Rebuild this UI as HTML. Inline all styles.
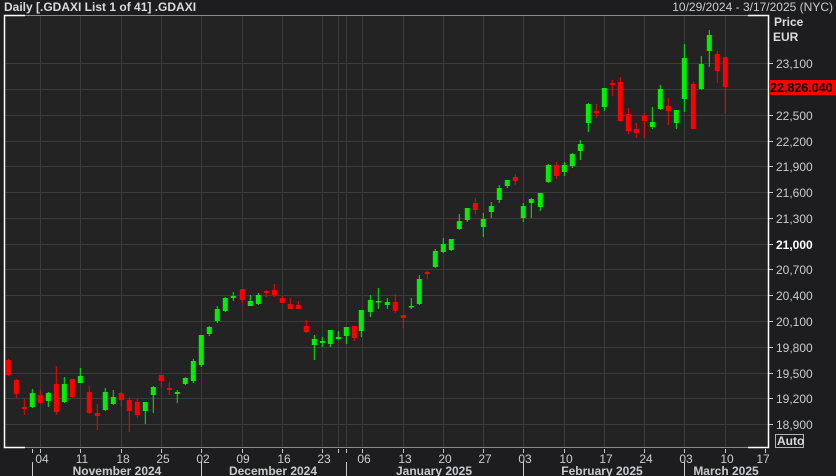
<!DOCTYPE html>
<html><head><meta charset="utf-8"><style>
html,body{margin:0;padding:0;background:#1d1d1f;width:836px;height:476px;overflow:hidden}
svg{display:block}
text{font-family:"Liberation Sans","DejaVu Sans",sans-serif;font-size:12px;fill:#c8ccd0}
.b{font-weight:bold}
</style></head><body>
<svg width="836" height="476" viewBox="0 0 836 476" xmlns="http://www.w3.org/2000/svg">
<rect x="0" y="0" width="836" height="476" fill="#1d1d1f"/>
<rect x="4" y="15" width="764" height="432" fill="#222322"/>
<text x="4" y="11" class="b" style="fill:#d8dadc">Daily [.GDAXI List 1 of 41] .GDAXI</text>
<text x="833" y="11" text-anchor="end" style="fill:#c8ccd0">10/29/2024 - 3/17/2025 (NYC)</text>
<g stroke="#3a3b3a" stroke-width="1">
<line x1="4" x2="768" y1="63.5" y2="63.5"/><line x1="4" x2="768" y1="89.5" y2="89.5"/><line x1="4" x2="768" y1="115.5" y2="115.5"/><line x1="4" x2="768" y1="141.5" y2="141.5"/><line x1="4" x2="768" y1="166.5" y2="166.5"/><line x1="4" x2="768" y1="192.5" y2="192.5"/><line x1="4" x2="768" y1="218.5" y2="218.5"/><line x1="4" x2="768" y1="244.5" y2="244.5"/><line x1="4" x2="768" y1="269.5" y2="269.5"/><line x1="4" x2="768" y1="295.5" y2="295.5"/><line x1="4" x2="768" y1="321.5" y2="321.5"/><line x1="4" x2="768" y1="347.5" y2="347.5"/><line x1="4" x2="768" y1="373.5" y2="373.5"/><line x1="4" x2="768" y1="398.5" y2="398.5"/><line x1="4" x2="768" y1="424.5" y2="424.5"/>
<line y1="15" y2="447" x1="40.5" x2="40.5"/><line y1="15" y2="447" x1="80.5" x2="80.5"/><line y1="15" y2="447" x1="121.5" x2="121.5"/><line y1="15" y2="447" x1="161.5" x2="161.5"/><line y1="15" y2="447" x1="201.5" x2="201.5"/><line y1="15" y2="447" x1="242.5" x2="242.5"/><line y1="15" y2="447" x1="282.5" x2="282.5"/><line y1="15" y2="447" x1="322.5" x2="322.5"/><line y1="15" y2="447" x1="338.5" x2="338.5"/><line y1="15" y2="447" x1="346.5" x2="346.5"/><line y1="15" y2="447" x1="362.5" x2="362.5"/><line y1="15" y2="447" x1="403.5" x2="403.5"/><line y1="15" y2="447" x1="443.5" x2="443.5"/><line y1="15" y2="447" x1="483.5" x2="483.5"/><line y1="15" y2="447" x1="523.5" x2="523.5"/><line y1="15" y2="447" x1="564.5" x2="564.5"/><line y1="15" y2="447" x1="604.5" x2="604.5"/><line y1="15" y2="447" x1="644.5" x2="644.5"/><line y1="15" y2="447" x1="684.5" x2="684.5"/><line y1="15" y2="447" x1="725.5" x2="725.5"/>
</g>
<!-- borders -->
<g stroke="#8a8a8a" stroke-width="1" fill="none"><line x1="4" x2="768" y1="15.5" y2="15.5"/><line x1="4" x2="768" y1="447.5" y2="447.5"/></g>
<g stroke="#ffffff" stroke-width="1.5" fill="none">
<polyline points="25,15.5 4.5,15.5 4.5,447.5 25,447.5"/>
<polyline points="748,15.5 768.5,15.5 768.5,447.5 748,447.5"/>
</g>
<!-- candles -->
<g id="c">
<g fill="#ff0000"><rect x="7.8" y="359" width="1" height="17"/><rect x="5.8" y="360" width="5" height="15"/></g>
<g fill="#ff0000"><rect x="15.8" y="379" width="1" height="19"/><rect x="13.8" y="380" width="5" height="14"/></g>
<g fill="#ff0000"><rect x="23.8" y="399" width="1" height="16"/><rect x="21.8" y="407" width="5" height="2"/></g>
<g fill="#00f000"><rect x="31.8" y="389" width="1" height="19"/><rect x="29.8" y="393" width="5" height="14"/></g>
<g fill="#ff0000"><rect x="39.8" y="390" width="1" height="13"/><rect x="37.8" y="395" width="5" height="8"/></g>
<g fill="#00f000"><rect x="47.8" y="392" width="1" height="15"/><rect x="45.8" y="393" width="5" height="8"/></g>
<g fill="#ff0000"><rect x="55.8" y="366" width="1" height="49"/><rect x="53.8" y="384" width="5" height="28"/></g>
<g fill="#00f000"><rect x="63.8" y="377" width="1" height="26"/><rect x="61.8" y="384" width="5" height="18"/></g>
<g fill="#ff0000"><rect x="71.8" y="379" width="1" height="19"/><rect x="69.8" y="379" width="5" height="18"/></g>
<g fill="#00f000"><rect x="79.8" y="368" width="1" height="15"/><rect x="77.8" y="376" width="5" height="7"/></g>
<g fill="#ff0000"><rect x="88.8" y="386" width="1" height="28"/><rect x="86.8" y="392" width="5" height="21"/></g>
<g fill="#ff0000"><rect x="96.8" y="404" width="1" height="26"/><rect x="94.8" y="413" width="5" height="3"/></g>
<g fill="#00f000"><rect x="104.8" y="388" width="1" height="23"/><rect x="102.8" y="392" width="5" height="18"/></g>
<g fill="#00f000"><rect x="112.8" y="390" width="1" height="15"/><rect x="110.8" y="397" width="5" height="7"/></g>
<g fill="#ff0000"><rect x="120.8" y="392" width="1" height="15"/><rect x="118.8" y="393" width="5" height="7"/></g>
<g fill="#ff0000"><rect x="128.8" y="397" width="1" height="35"/><rect x="126.8" y="400" width="5" height="11"/></g>
<g fill="#ff0000"><rect x="136.8" y="398" width="1" height="20"/><rect x="134.8" y="402" width="5" height="13"/></g>
<g fill="#00f000"><rect x="144.8" y="402" width="1" height="22"/><rect x="142.8" y="402" width="5" height="9"/></g>
<g fill="#00f000"><rect x="152.8" y="386" width="1" height="27"/><rect x="150.8" y="387" width="5" height="8"/></g>
<g fill="#ff0000"><rect x="160.8" y="375" width="1" height="12"/><rect x="158.8" y="375" width="5" height="6"/></g>
<g fill="#ff0000"><rect x="168.8" y="382" width="1" height="13"/><rect x="166.8" y="388" width="5" height="2"/></g>
<g fill="#00f000"><rect x="176.8" y="390" width="1" height="13"/><rect x="174.8" y="392" width="5" height="2"/></g>
<g fill="#00f000"><rect x="184.8" y="377" width="1" height="8"/><rect x="182.8" y="378" width="5" height="6"/></g>
<g fill="#00f000"><rect x="192.8" y="359" width="1" height="24"/><rect x="190.8" y="361" width="5" height="20"/></g>
<g fill="#00f000"><rect x="200.8" y="335" width="1" height="32"/><rect x="198.8" y="335" width="5" height="30"/></g>
<g fill="#00f000"><rect x="208.8" y="326" width="1" height="10"/><rect x="206.8" y="327" width="5" height="7"/></g>
<g fill="#00f000"><rect x="216.8" y="306" width="1" height="17"/><rect x="214.8" y="309" width="5" height="12"/></g>
<g fill="#00f000"><rect x="224.8" y="297" width="1" height="15"/><rect x="222.8" y="298" width="5" height="13"/></g>
<g fill="#00f000"><rect x="232.8" y="292" width="1" height="9"/><rect x="230.8" y="296" width="5" height="2"/></g>
<g fill="#ff0000"><rect x="241.8" y="289" width="1" height="14"/><rect x="239.8" y="289" width="5" height="11"/></g>
<g fill="#00f000"><rect x="249.8" y="295" width="1" height="11"/><rect x="247.8" y="301" width="5" height="5"/></g>
<g fill="#00f000"><rect x="257.8" y="293" width="1" height="12"/><rect x="255.8" y="295" width="5" height="9"/></g>
<g fill="#ff0000"><rect x="265.8" y="290" width="1" height="7"/><rect x="263.8" y="291" width="5" height="2"/></g>
<g fill="#ff0000"><rect x="273.8" y="284" width="1" height="13"/><rect x="271.8" y="290" width="5" height="5"/></g>
<g fill="#ff0000"><rect x="281.8" y="296" width="1" height="7"/><rect x="279.8" y="298" width="5" height="5"/></g>
<g fill="#ff0000"><rect x="289.8" y="298" width="1" height="11"/><rect x="287.8" y="304" width="5" height="5"/></g>
<g fill="#ff0000"><rect x="297.8" y="301" width="1" height="8"/><rect x="295.8" y="305" width="5" height="4"/></g>
<g fill="#ff0000"><rect x="305.8" y="320" width="1" height="13"/><rect x="303.8" y="326" width="5" height="6"/></g>
<g fill="#00f000"><rect x="313.8" y="335" width="1" height="25"/><rect x="311.8" y="339" width="5" height="6"/></g>
<g fill="#00f000"><rect x="321.8" y="337" width="1" height="10"/><rect x="319.8" y="341" width="5" height="2"/></g>
<g fill="#00f000"><rect x="329.8" y="330" width="1" height="17"/><rect x="327.8" y="330" width="5" height="14"/></g>
<g fill="#00f000"><rect x="337.8" y="331" width="1" height="9"/><rect x="335.8" y="337" width="5" height="2"/></g>
<g fill="#00f000"><rect x="345.8" y="327" width="1" height="17"/><rect x="343.8" y="327" width="5" height="9"/></g>
<g fill="#ff0000"><rect x="353.8" y="326" width="1" height="15"/><rect x="351.8" y="326" width="5" height="12"/></g>
<g fill="#00f000"><rect x="360.8" y="310" width="1" height="27"/><rect x="358.8" y="310" width="5" height="21"/></g>
<g fill="#00f000"><rect x="369.8" y="295" width="1" height="22"/><rect x="367.8" y="300" width="5" height="12"/></g>
<g fill="#00f000"><rect x="377.8" y="288" width="1" height="21"/><rect x="375.8" y="301" width="5" height="1.5"/></g>
<g fill="#00f000"><rect x="386.8" y="298" width="1" height="11"/><rect x="384.8" y="302" width="5" height="3"/></g>
<g fill="#ff0000"><rect x="394.8" y="294" width="1" height="19"/><rect x="392.8" y="302" width="5" height="9"/></g>
<g fill="#ff0000"><rect x="402.8" y="315" width="1" height="13"/><rect x="400.8" y="315" width="5" height="3"/></g>
<g fill="#00f000"><rect x="410.8" y="298" width="1" height="11"/><rect x="408.8" y="306" width="5" height="1.5"/></g>
<g fill="#00f000"><rect x="418.8" y="275" width="1" height="30"/><rect x="416.8" y="279" width="5" height="25"/></g>
<g fill="#ff0000"><rect x="426.8" y="271" width="1" height="8"/><rect x="424.8" y="272" width="5" height="2"/></g>
<g fill="#00f000"><rect x="434.8" y="249" width="1" height="19"/><rect x="432.8" y="251" width="5" height="16"/></g>
<g fill="#00f000"><rect x="442.8" y="238" width="1" height="15"/><rect x="440.8" y="244" width="5" height="8"/></g>
<g fill="#00f000"><rect x="450.8" y="239" width="1" height="12"/><rect x="448.8" y="239" width="5" height="11"/></g>
<g fill="#00f000"><rect x="458.8" y="214" width="1" height="16"/><rect x="456.8" y="221" width="5" height="8"/></g>
<g fill="#00f000"><rect x="466.8" y="208" width="1" height="14"/><rect x="464.8" y="208" width="5" height="12"/></g>
<g fill="#ff0000"><rect x="474.8" y="198" width="1" height="16"/><rect x="472.8" y="203" width="5" height="7"/></g>
<g fill="#00f000"><rect x="482.8" y="213" width="1" height="24"/><rect x="480.8" y="219" width="5" height="8"/></g>
<g fill="#00f000"><rect x="490.8" y="202" width="1" height="16"/><rect x="488.8" y="206" width="5" height="6"/></g>
<g fill="#00f000"><rect x="498.8" y="185" width="1" height="18"/><rect x="496.8" y="188" width="5" height="12"/></g>
<g fill="#00f000"><rect x="506.8" y="180" width="1" height="8"/><rect x="504.8" y="180" width="5" height="6"/></g>
<g fill="#ff0000"><rect x="514.8" y="174" width="1" height="11"/><rect x="512.8" y="177" width="5" height="4"/></g>
<g fill="#00f000"><rect x="522.8" y="203" width="1" height="19"/><rect x="520.8" y="206" width="5" height="12"/></g>
<g fill="#00f000"><rect x="530.8" y="198" width="1" height="20"/><rect x="528.8" y="199" width="5" height="4"/></g>
<g fill="#00f000"><rect x="539.8" y="193" width="1" height="18"/><rect x="537.8" y="193" width="5" height="14"/></g>
<g fill="#00f000"><rect x="547.8" y="164" width="1" height="19"/><rect x="545.8" y="165" width="5" height="17"/></g>
<g fill="#ff0000"><rect x="555.8" y="162" width="1" height="17"/><rect x="553.8" y="165" width="5" height="11"/></g>
<g fill="#00f000"><rect x="563.8" y="162" width="1" height="14"/><rect x="561.8" y="165" width="5" height="7"/></g>
<g fill="#00f000"><rect x="571.8" y="153" width="1" height="15"/><rect x="569.8" y="154" width="5" height="12"/></g>
<g fill="#00f000"><rect x="579.8" y="140" width="1" height="20"/><rect x="577.8" y="144" width="5" height="7"/></g>
<g fill="#00f000"><rect x="587.8" y="103" width="1" height="29"/><rect x="585.8" y="104" width="5" height="19"/></g>
<g fill="#ff0000"><rect x="595.8" y="104" width="1" height="14"/><rect x="593.8" y="111" width="5" height="2"/></g>
<g fill="#00f000"><rect x="603.8" y="88" width="1" height="23"/><rect x="601.8" y="88" width="5" height="19"/></g>
<g fill="#ff0000"><rect x="611.8" y="80" width="1" height="16"/><rect x="609.8" y="83" width="5" height="2"/></g>
<g fill="#ff0000"><rect x="619.8" y="77" width="1" height="45"/><rect x="617.8" y="82" width="5" height="39"/></g>
<g fill="#ff0000"><rect x="627.8" y="108" width="1" height="26"/><rect x="625.8" y="114" width="5" height="17"/></g>
<g fill="#ff0000"><rect x="635.8" y="123" width="1" height="15"/><rect x="633.8" y="129" width="5" height="4"/></g>
<g fill="#ff0000"><rect x="643.8" y="113" width="1" height="25"/><rect x="641.8" y="116" width="5" height="5"/></g>
<g fill="#00f000"><rect x="651.8" y="107" width="1" height="22"/><rect x="649.8" y="122" width="5" height="5"/></g>
<g fill="#00f000"><rect x="659.8" y="85" width="1" height="25"/><rect x="657.8" y="89" width="5" height="20"/></g>
<g fill="#ff0000"><rect x="667.8" y="98" width="1" height="27"/><rect x="665.8" y="106" width="5" height="5"/></g>
<g fill="#00f000"><rect x="675.8" y="110" width="1" height="19"/><rect x="673.8" y="110" width="5" height="13"/></g>
<g fill="#00f000"><rect x="683.8" y="44" width="1" height="68"/><rect x="681.8" y="58" width="5" height="41"/></g>
<g fill="#ff0000"><rect x="692.8" y="82" width="1" height="47"/><rect x="690.8" y="84" width="5" height="45"/></g>
<g fill="#00f000"><rect x="700.8" y="56" width="1" height="34"/><rect x="698.8" y="64" width="5" height="25"/></g>
<g fill="#00f000"><rect x="708.8" y="30" width="1" height="37"/><rect x="706.8" y="35" width="5" height="16"/></g>
<g fill="#ff0000"><rect x="716.8" y="51" width="1" height="32"/><rect x="714.8" y="54" width="5" height="17"/></g>
<g fill="#ff0000"><rect x="724.8" y="57" width="1" height="56"/><rect x="722.8" y="57" width="5" height="30"/></g>
</g>
<!-- right axis -->
<g stroke="#c8ccd0" stroke-width="1">
<line x1="769" x2="773" y1="63.5" y2="63.5"/><line x1="769" x2="773" y1="115.5" y2="115.5"/><line x1="769" x2="773" y1="141.5" y2="141.5"/><line x1="769" x2="773" y1="166.5" y2="166.5"/><line x1="769" x2="773" y1="192.5" y2="192.5"/><line x1="769" x2="773" y1="218.5" y2="218.5"/><line x1="769" x2="773" y1="244.5" y2="244.5"/><line x1="769" x2="773" y1="269.5" y2="269.5"/><line x1="769" x2="773" y1="295.5" y2="295.5"/><line x1="769" x2="773" y1="321.5" y2="321.5"/><line x1="769" x2="773" y1="347.5" y2="347.5"/><line x1="769" x2="773" y1="373.5" y2="373.5"/><line x1="769" x2="773" y1="398.5" y2="398.5"/><line x1="769" x2="773" y1="424.5" y2="424.5"/>
</g>
<text x="774" y="26" class="b" style="fill:#d8dadc">Price</text>
<text x="773" y="41" class="b" style="fill:#d8dadc">EUR</text>
<g>
<text x="776" y="68">23,100</text><text x="776" y="120">22,500</text><text x="776" y="146">22,200</text><text x="776" y="171">21,900</text><text x="776" y="197">21,600</text><text x="776" y="223">21,300</text><text x="776" y="249" class="b" style="fill:#ffffff">21,000</text><text x="776" y="274">20,700</text><text x="776" y="300">20,400</text><text x="776" y="326">20,100</text><text x="776" y="352">19,800</text><text x="776" y="378">19,500</text><text x="776" y="403">19,200</text><text x="776" y="429">18,900</text>
</g>
<rect x="769" y="80" width="67" height="15" fill="#ff0000"/>
<text x="770" y="92" class="b" style="fill:#000;font-size:12.5px">22,826.040</text>
<rect x="775.5" y="434.5" width="28" height="13" fill="none" stroke="#b0b4b8" stroke-width="1"/>
<text x="777" y="445" class="b" style="fill:#d8dadc">Auto</text>
<!-- bottom axis -->
<g stroke="#c8ccd0" stroke-width="1">
<line x1="32.5" x2="32.5" y1="449" y2="453"/><line x1="40.5" x2="40.5" y1="449" y2="453"/><line x1="80.5" x2="80.5" y1="449" y2="453"/><line x1="121.5" x2="121.5" y1="449" y2="453"/><line x1="161.5" x2="161.5" y1="449" y2="453"/><line x1="201.5" x2="201.5" y1="449" y2="453"/><line x1="242.5" x2="242.5" y1="449" y2="453"/><line x1="282.5" x2="282.5" y1="449" y2="453"/><line x1="322.5" x2="322.5" y1="449" y2="453"/><line x1="338.5" x2="338.5" y1="449" y2="453"/><line x1="346.5" x2="346.5" y1="449" y2="453"/><line x1="362.5" x2="362.5" y1="449" y2="453"/><line x1="403.5" x2="403.5" y1="449" y2="453"/><line x1="443.5" x2="443.5" y1="449" y2="453"/><line x1="483.5" x2="483.5" y1="449" y2="453"/><line x1="523.5" x2="523.5" y1="449" y2="453"/><line x1="564.5" x2="564.5" y1="449" y2="453"/><line x1="604.5" x2="604.5" y1="449" y2="453"/><line x1="644.5" x2="644.5" y1="449" y2="453"/><line x1="684.5" x2="684.5" y1="449" y2="453"/><line x1="725.5" x2="725.5" y1="449" y2="453"/><line x1="765.5" x2="765.5" y1="449" y2="453"/>
<line x1="32.5" x2="32.5" y1="462" y2="476"/><line x1="201.5" x2="201.5" y1="462" y2="476"/><line x1="346.5" x2="346.5" y1="462" y2="476"/><line x1="523.5" x2="523.5" y1="462" y2="476"/><line x1="684.5" x2="684.5" y1="462" y2="476"/>
</g>
<g text-anchor="middle">
<text x="42" y="463">04</text><text x="82" y="463">11</text><text x="123" y="463">18</text><text x="163" y="463">25</text><text x="203" y="463">02</text><text x="243" y="463">09</text><text x="284" y="463">16</text><text x="324" y="463">23</text><text x="364" y="463">06</text><text x="405" y="463">13</text><text x="445" y="463">20</text><text x="485" y="463">27</text><text x="525" y="463">03</text><text x="566" y="463">10</text><text x="606" y="463">17</text><text x="646" y="463">24</text><text x="686" y="463">03</text><text x="727" y="463">10</text><text x="763" y="463">17</text>
</g>
<g class="b" text-anchor="middle" style="fill:#d8dadc">
<text x="117" y="475" class="b">November 2024</text><text x="273" y="475" class="b">December 2024</text><text x="434" y="475" class="b">January 2025</text><text x="602" y="475" class="b">February 2025</text><text x="726" y="475" class="b">March 2025</text>
</g>
</svg>
</body></html>
